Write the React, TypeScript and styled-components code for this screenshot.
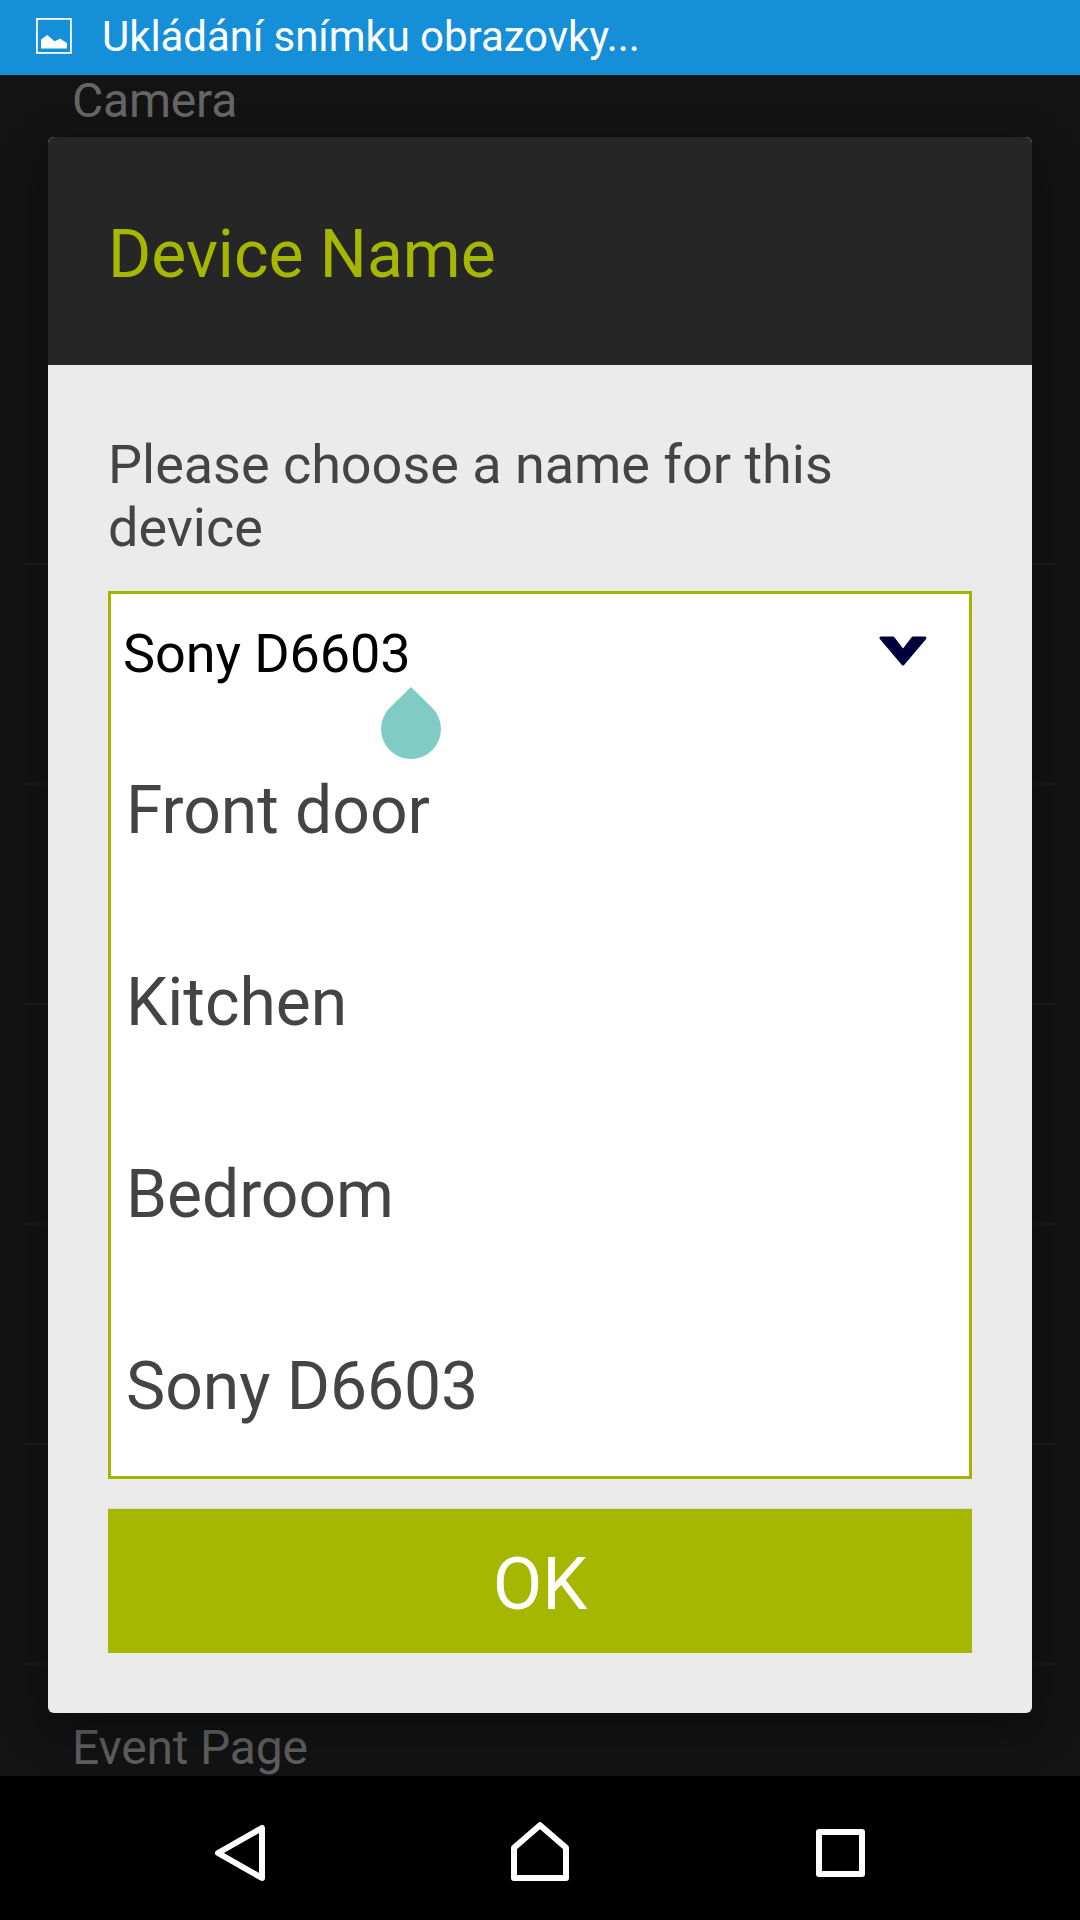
import React from 'react';
import styled, { createGlobalStyle } from 'styled-components';

const Global = createGlobalStyle`
  * { box-sizing: border-box; }
  body { margin: 0; background: #000; font-family: Roboto, sans-serif; }
`;
const Screen = styled.div`
  width: 1080px; height: 1920px; display: grid; grid-template-rows: 75px 1701px 144px; overflow: hidden;
`;
const StatusBar = styled.header`
  display: flex; align-items: center; gap: 30px; padding: 0 0 3px 36px;
  background: #168fd9; color: #fff; font-size: 42px; letter-spacing: -0.06px;
`;
const Backdrop = styled.main`
  display: grid; grid-template-columns: 1fr; grid-template-rows: 1fr; background: #131313;
`;
const Page = styled.div`
  grid-area: 1 / 1; display: flex; flex-direction: column; padding: 0 24px;
`;
const PageRow = styled.div<{ $h: number; $top?: number; $last?: boolean }>`
  height: ${p => p.$h}px; border-bottom: ${p => (p.$last ? '0' : '2px solid #1b1b1b')};
  padding: ${p => p.$top ?? 0}px 0 0 48px;
  color: ${p => (p.$last ? '#5f5f5f' : '#656565')};
  font-size: 48px; line-height: 52px; letter-spacing: -0.2px; flex: none;
`;
const Dialog = styled.section`
  grid-area: 1 / 1; z-index: 1; margin: 62px 48px 0; height: 1576px; border-radius: 6px;
  background: #ebebeb; overflow: hidden; box-shadow: 0 16px 44px rgba(0,0,0,.35);
  display: flex; flex-direction: column;
`;
const Title = styled.h1`
  margin: 0; height: 228px; padding: 7px 60px 0; display: flex; align-items: center;
  background: #262626; color: #a5b700; font-weight: 400; font-size: 66px;
`;
const Content = styled.div`
  display: flex; flex-direction: column; padding: 68px 60px 0;
`;
const Prompt = styled.p`
  margin: 0; height: 158px; color: #444; font-size: 54px; line-height: 63px; letter-spacing: -0.03px;
`;
const Combo = styled.div`
  height: 888px; border: 3px solid #a2b400; background: #fff;
`;
const Field = styled.div`
  position: relative; height: 120px; display: flex; align-items: center; justify-content: space-between;
  padding: 0 42px 2px 12px; color: #000; font-size: 54px; letter-spacing: -0.1px;
`;
const Chevron = styled.svg`
  margin-bottom: 4px;
`;
const Handle = styled.svg`
  position: absolute; left: 270px; top: 93px;
`;
const Option = styled.div`
  height: 192px; padding-left: 15px; display: flex; align-items: center;
  color: #444; font-size: 66px; letter-spacing: -0.05px;
`;
const OkButton = styled.button`
  margin-top: 30px; padding: 6px 0 0; height: 144px; border: 0; background: #a5b700; color: #fff;
  font: 400 72px Roboto, sans-serif; box-shadow: 0 -1px 0 #dcdcdc;
`;
const NavBar = styled.nav`
  display: flex; justify-content: center; align-items: center; gap: 240px; background: #000;
  z-index: 2;
`;
const NavIcon = styled.svg.attrs({ viewBox: '0 0 60 72' })`
  width: 60px; height: 72px; fill: none; stroke: #fff; stroke-width: 6px; stroke-linejoin: round;
`;

const names = ['Front door', 'Kitchen', 'Bedroom', 'Sony D6603'];

export default function App() {
  return (
    <Screen>
      <Global />
      <StatusBar>
        <svg width="36" height="36" viewBox="0 0 36 36">
          <rect x=".9" y=".9" width="34" height="34" fill="none" stroke="#fff" strokeWidth="1.8" />
          <path d="M5 30.5V21.5L11.3 17L18.5 23.2L24.2 20.8L31 25V30.5z" fill="#fff" />
        </svg>
        <span>Ukládání snímku obrazovky...</span>
      </StatusBar>
      <Backdrop>
        <Page>
          <PageRow $h={490}>Camera</PageRow>
          {[1, 2, 3, 4, 5].map(i => <PageRow key={i} $h={220} />)}
          <PageRow $h={111} $top={57} $last>Event Page</PageRow>
        </Page>
        <Dialog>
          <Title>Device Name</Title>
          <Content>
            <Prompt>Please choose a name for this device</Prompt>
            <Combo>
              <Field>
                <span>Sony D6603</span>
                <Chevron width="48" height="30" viewBox="0 0 48 30">
                  <path d="M2 2H14L24 15L34 2H46L24 28z" fill="#00003a" stroke="#00003a" strokeWidth="3" strokeLinejoin="round" />
                </Chevron>
                <Handle width="60" height="72" viewBox="0 0 60 72">
                  <path d="M30 0L51.2 20.8A30 30 0 1 1 8.8 20.8z" fill="#80cbc4" />
                </Handle>
              </Field>
              {names.map(n => <Option key={n}>{n}</Option>)}
            </Combo>
            <OkButton>OK</OkButton>
          </Content>
        </Dialog>
      </Backdrop>
      <NavBar>
        <NavIcon><path d="M52 16V66L8 41z" /></NavIcon>
        <NavIcon><path d="M4 66V35.8L30 13.2L56 35.8V66z" /></NavIcon>
        <NavIcon><rect x="9" y="20" width="43" height="42" /></NavIcon>
      </NavBar>
    </Screen>
  );
}
